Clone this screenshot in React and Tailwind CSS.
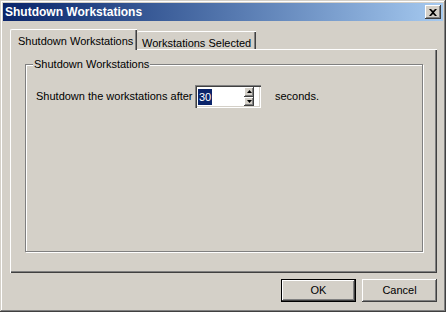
import React from "react";

const raised =
  "shadow-[inset_-1px_-1px_#404040,inset_1px_1px_#ffffff,inset_-2px_-2px_#808080,inset_2px_2px_#d4d0c8]";

function CloseButton() {
  return (
    <div className={`w-[16px] h-[14px] bg-[#d4d0c8] flex items-center justify-center ${raised}`}>
      <svg width="8" height="7" viewBox="0 0 8 7">
        <path d="M0 0h2l2 2 2-2h2L5 3.5 8 7H6L4 5 2 7H0l3-3.5z" fill="#000" />
      </svg>
    </div>
  );
}

function SpinBox() {
  return (
    <div className="w-[66px] h-[23px] bg-white flex shadow-[inset_1px_1px_#808080,inset_2px_2px_#404040,inset_-1px_-1px_#ffffff,inset_-2px_-2px_#d4d0c8] p-[2px]">
      <div className="flex-1 flex items-center pl-[1px]">
        <span className="bg-[#0a246a] text-white leading-[16px] px-[1px]">30</span>
      </div>
      <div className="w-[10px] flex flex-col">
        <div className={`flex-1 bg-[#d4d0c8] flex items-center justify-center ${raised}`}>
          <svg width="5" height="3" viewBox="0 0 5 3">
            <path d="M2.5 0 5 3H0z" fill="#000" />
          </svg>
        </div>
        <div className={`flex-1 bg-[#d4d0c8] flex items-center justify-center ${raised}`}>
          <svg width="5" height="3" viewBox="0 0 5 3">
            <path d="M0 0h5L2.5 3z" fill="#000" />
          </svg>
        </div>
      </div>
      <div className="w-[5px]" />
    </div>
  );
}

export default function App() {
  return (
    <div
      className="w-[446px] h-[312px] bg-[#d4d0c8] p-[3px] text-[11px] text-black shadow-[inset_-1px_-1px_#404040,inset_1px_1px_#d4d0c8,inset_-2px_-2px_#808080,inset_2px_2px_#ffffff] overflow-hidden"
      style={{ fontFamily: '"Liberation Sans", Arial, sans-serif' }}
    >
      {/* title bar */}
      <div className="h-[18px] flex items-center justify-between pl-[2px] pr-[2px] bg-gradient-to-r from-[#0a246a] to-[#a6caf0]">
        <span className="text-white font-bold text-[12px]">Shutdown Workstations</span>
        <CloseButton />
      </div>

      <div className="pl-[7px] pt-[8px]">
        {/* tabs */}
        <div className="flex items-end h-[20px]">
          <div className="relative z-10 w-[127px] h-[21px] -mb-[1px] bg-[#d4d0c8] border-l border-t border-white rounded-tl-[2px] shadow-[inset_-1px_0_#404040,inset_-2px_0_#808080] pl-[7px] pt-[3px]">
            Shutdown Workstations
          </div>
          <div className="w-[119px] h-[18px] bg-[#d4d0c8] border-t border-white rounded-tl-[2px] shadow-[inset_-1px_0_#404040,inset_-2px_0_#808080] pl-[5px] pt-[3px]">
            Workstations Selected
          </div>
        </div>

        {/* panel */}
        <div className="w-[427px] h-[224px] border-l border-t border-white shadow-[inset_-1px_-1px_#404040,inset_-2px_-2px_#808080] pl-[14px] pt-[14px]">
          <div className="relative w-[398px] h-[188px] border border-[#808080] shadow-[inset_1px_1px_#ffffff,1px_1px_#ffffff] pl-[10px] pt-[20px]">
            <span className="absolute left-[7px] -top-[8px] bg-[#d4d0c8] px-[1px] leading-[14px]">
              Shutdown Workstations
            </span>
            <div className="flex items-center">
              <span className="w-[159px]">Shutdown the workstations after</span>
              <SpinBox />
              <span className="ml-[14px]">seconds.</span>
            </div>
          </div>
        </div>

        {/* buttons */}
        <div className="w-[427px] flex justify-end gap-[6px] pt-[6px]">
          <div className="w-[75px] h-[23px] border border-black bg-[#d4d0c8] flex items-center justify-center shadow-[inset_-1px_-1px_#404040,inset_1px_1px_#ffffff,inset_-2px_-2px_#808080]">
            OK
          </div>
          <div className={`w-[75px] h-[23px] bg-[#d4d0c8] flex items-center justify-center ${raised}`}>
            Cancel
          </div>
        </div>
      </div>
    </div>
  );
}
